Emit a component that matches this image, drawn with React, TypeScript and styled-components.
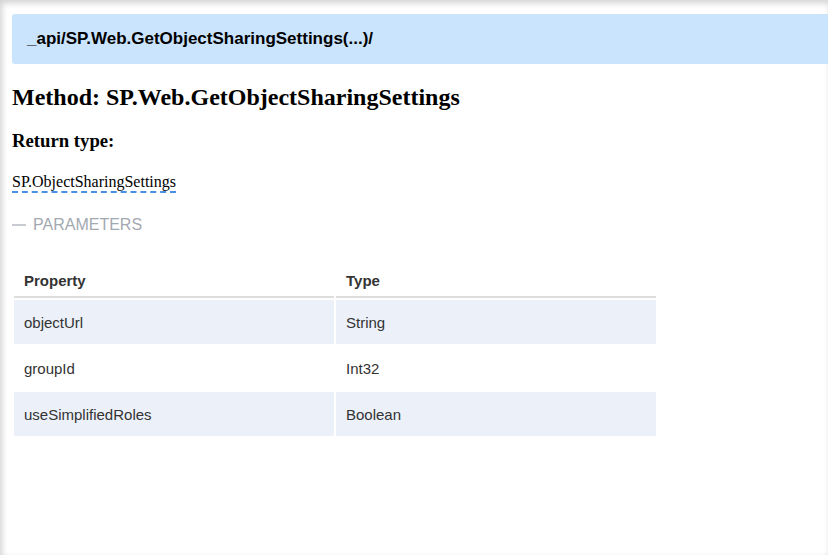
import React from "react";
import styled, { createGlobalStyle } from "styled-components";

const Global = createGlobalStyle`
  html, body { margin: 0; padding: 0; background: #fff; }
  body { font-family: "Liberation Serif", "Times New Roman", serif; }
`;

const Page = styled.div`
  position: relative;
  width: 828px;
  height: 555px;
  box-sizing: border-box;
  padding: 14px 0 0 12px;
  overflow: hidden;
  box-shadow: inset 2px 3px 6px rgba(0, 0, 0, 0.18);
`;

const Banner = styled.div`
  height: 50px;
  box-sizing: border-box;
  background: #cbe4fd;
  border-radius: 3px 0 0 3px;
  padding: 0 15px;
  display: flex;
  align-items: center;
  font-family: "Liberation Sans", Arial, sans-serif;
  font-weight: bold;
  font-size: 17px;
  color: #000;
`;

const Title = styled.h2`
  margin: 19px 0 0;
  font-size: 24px;
  font-weight: bold;
  line-height: 28px;
  color: #000;
`;

const SubTitle = styled.h3`
  margin: 19px 0 0;
  font-size: 18.72px;
  font-weight: bold;
  line-height: 22px;
  color: #000;
`;

const TypeLink = styled.a`
  display: block;
  width: fit-content;
  margin-top: 21px;
  font-size: 16px;
  line-height: 18px;
  color: #000;
  text-decoration: none;
  border-bottom: 2px dashed #4a90e2;
`;

const Section = styled.div`
  margin-top: 23px;
  display: flex;
  align-items: center;
  gap: 7px;
  font-family: "Liberation Sans", Arial, sans-serif;
  font-size: 16px;
  color: #a3a9b1;
  line-height: 18px;
`;

const Dash = styled.span`
  width: 14px;
  height: 2px;
  background: #c8ccd2;
`;

const Table = styled.table`
  margin-top: 27px;
  width: 646px;
  border-collapse: separate;
  border-spacing: 2px;
  font-family: "Liberation Sans", Arial, sans-serif;
  font-size: 15px;
  color: #333;
  table-layout: fixed;
`;

const Th = styled.th`
  text-align: left;
  font-weight: bold;
  line-height: 17px;
  padding: 9px 10px 7px;
  border-bottom: 2px solid #dddddd;
`;

const Td = styled.td<{ $alt: boolean }>`
  height: 44px;
  padding: 0 10px;
  box-sizing: border-box;
  background: ${(p) => (p.$alt ? "#ebf0f9" : "#fff")};
`;

const params = [
  { name: "objectUrl", type: "String" },
  { name: "groupId", type: "Int32" },
  { name: "useSimplifiedRoles", type: "Boolean" },
];

export default function App() {
  return (
    <>
      <Global />
      <Page>
        <Banner>_api/SP.Web.GetObjectSharingSettings(...)/</Banner>
        <Title>Method: SP.Web.GetObjectSharingSettings</Title>
        <SubTitle>Return type:</SubTitle>
        <TypeLink>SP.ObjectSharingSettings</TypeLink>
        <Section>
          <Dash />
          PARAMETERS
        </Section>
        <Table>
          <thead>
            <tr>
              <Th>Property</Th>
              <Th>Type</Th>
            </tr>
          </thead>
          <tbody>
            {params.map((p, i) => (
              <tr key={p.name}>
                <Td $alt={i % 2 === 0}>{p.name}</Td>
                <Td $alt={i % 2 === 0}>{p.type}</Td>
              </tr>
            ))}
          </tbody>
        </Table>
      </Page>
    </>
  );
}
